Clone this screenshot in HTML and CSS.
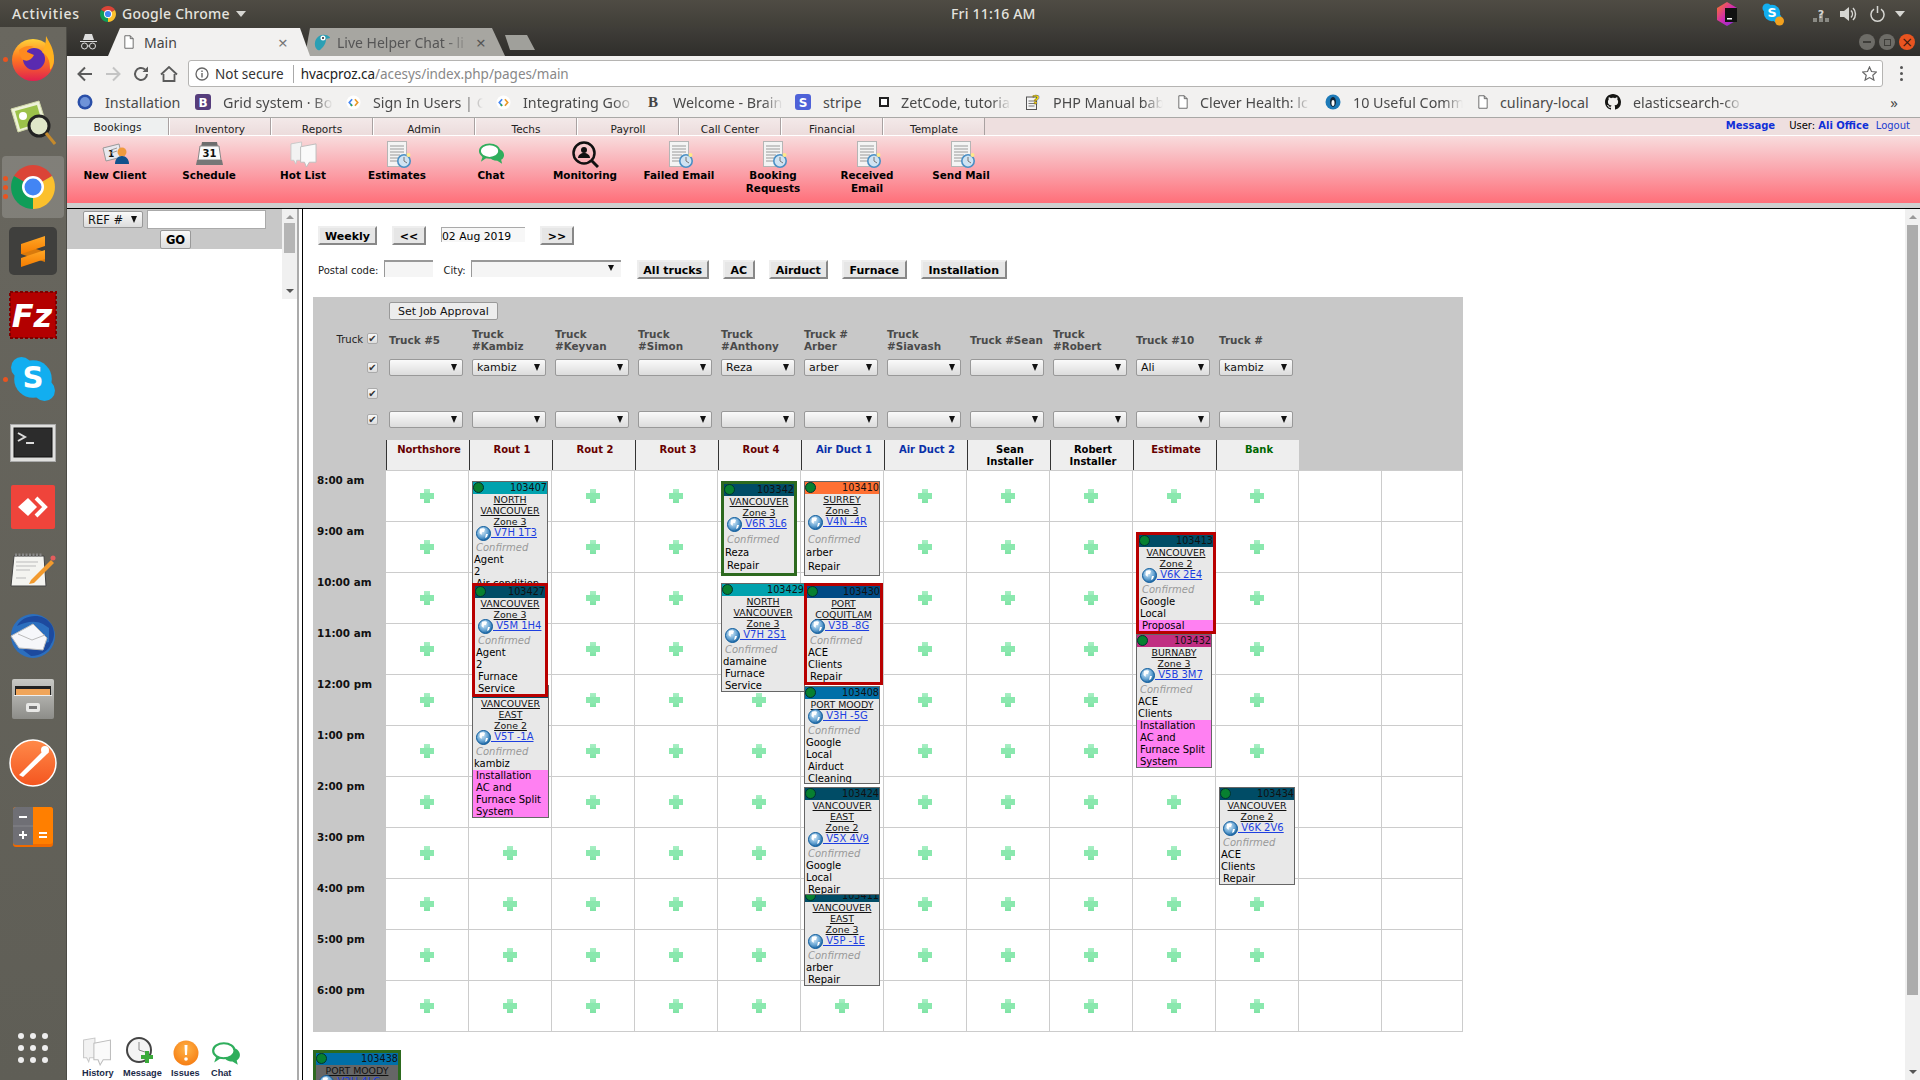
FILE: index.html
```html
<!DOCTYPE html>
<html lang="en">
<head>
<meta charset="utf-8">
<title>Main</title>
<link rel="stylesheet" href="styles.css">
</head>
<body>
<svg class="defs" aria-hidden="true">
  <defs>
    <linearGradient id="gFox" x1="0" y1="0" x2="0" y2="1"><stop offset="0" stop-color="#ffd33a"/><stop offset=".45" stop-color="#ff7a1f"/><stop offset="1" stop-color="#e0204f"/></linearGradient>
    <linearGradient id="gSub" x1="0" y1="0" x2="0" y2="1"><stop offset="0" stop-color="#ffa726"/><stop offset="1" stop-color="#f57c00"/></linearGradient>
    <linearGradient id="gPost" x1="0" y1="0" x2="0" y2="1"><stop offset="0" stop-color="#ff8a4a"/><stop offset="1" stop-color="#f4551f"/></linearGradient>
    <linearGradient id="gCab" x1="0" y1="0" x2="0" y2="1"><stop offset="0" stop-color="#c9c9c5"/><stop offset="1" stop-color="#8d8d89"/></linearGradient>
    <linearGradient id="gBrain" x1="0" y1="0" x2="1" y2="1"><stop offset="0" stop-color="#ff7a1a"/><stop offset=".5" stop-color="#d02bb0"/><stop offset="1" stop-color="#7a2be0"/></linearGradient>
    <radialGradient id="gGlobe" cx=".4" cy=".35" r=".7"><stop offset="0" stop-color="#d9ecf8"/><stop offset=".55" stop-color="#6ea9d6"/><stop offset="1" stop-color="#0f5c9c"/></radialGradient>
    <radialGradient id="gIssue" cx=".5" cy=".35" r=".7"><stop offset="0" stop-color="#ffb347"/><stop offset="1" stop-color="#f57a10"/></radialGradient>
    <symbol id="chrome" viewBox="0 0 44 44">
      <path d="M22 22 3 11A22 22 0 0 1 41 11Z" fill="#db4437"/>
      <path d="M22 22 41 11A22 22 0 0 1 22 44Z" fill="#fbc02d"/>
      <path d="M22 22 22 44A22 22 0 0 1 3 11Z" fill="#0f9d58"/>
      <circle cx="22" cy="22" r="11" fill="#fff"/><circle cx="22" cy="22" r="8.5" fill="#4285f4"/>
    </symbol>
    <symbol id="skype" viewBox="0 0 44 44">
      <circle cx="22" cy="22" r="18" fill="#12aef0"/><circle cx="11" cy="11" r="10" fill="#12aef0"/><circle cx="33" cy="33" r="10" fill="#12aef0"/>
      <text x="22" y="31" text-anchor="middle" class="svgtxt skype-s">S</text>
    </symbol>
    <symbol id="doc" viewBox="0 0 24 27">
      <rect x=".5" y=".5" width="19" height="25" fill="#f4f4f4" stroke="#b5b5b5"/>
      <path d="M3 5h14M3 8h14M3 11h14M3 14h10M3 17h8M3 20h8" stroke="#9a9a9a"/>
      <circle cx="17" cy="20" r="6.2" fill="#cfe3f2" stroke="#4a8fc4" stroke-width="1.6"/>
      <path d="M17 16v4l3 2" stroke="#777" fill="none"/>
      <circle cx="21.5" cy="14" r="2" fill="#ffe88a"/>
    </symbol>
    <symbol id="chat" viewBox="0 0 28 22">
      <ellipse cx="12" cy="8" rx="10" ry="7" fill="#fff" stroke="#2fae5c" stroke-width="2"/>
      <path d="M5 13 3 19l6-4Z" fill="#2fae5c"/>
      <path d="M21 5.5c4 1 6 3.500 6 6.500 0 2-1 4-3 5l1 4-5-3c-4 0-7-2-8-4 7 1 11-3 9-8.500Z" fill="#2fae5c"/>
    </symbol>
    <symbol id="notes" viewBox="0 0 28 28">
      <path d="M1 3 12 1v19l-5 0-1 4-2-4H1Z" fill="#f2f2f2" stroke="#c9c9c9"/>
      <path d="M11 6 27 3v19H20l-3 5-2-5h-4Z" fill="#fafafa" stroke="#bdbdbd"/>
    </symbol>
    <symbol id="globe" viewBox="0 0 15 15">
      <circle cx="7.500" cy="7.500" r="7" fill="url(#gGlobe)" stroke="#0f5c9c"/>
      <path d="M4 3c2-1 4-1 5 0L8 6 6 6 5.500 9 3.500 7Z" fill="#fff"/>
      <path d="M10 8l2 0-1 3-2 1Z" fill="#fff"/>
    </symbol>
    <symbol id="file" viewBox="0 0 12 16">
      <path d="M1 .5h6.500l3.500 3.500V15.500H1ZM7.500 .5V4H11" fill="#fff" stroke="#555"/>
    </symbol>
    <symbol id="gcode" viewBox="0 0 16 16">
      <circle cx="8" cy="8" r="7.500" fill="#fff"/>
      <path d="M6.500 4.500 3.500 8l3 3.500" fill="none" stroke="#4285f4" stroke-width="1.800"/>
      <path d="M9.500 4.500 12.500 8l-3 3.500" fill="none" stroke="#ea9a2a" stroke-width="1.800"/>
      <path d="M5 10l1.500 1.500" stroke="#34a853" stroke-width="1.800"/>
    </symbol>
  </defs>
</svg>

<div class="desktop">
  <header class="topbar">
    <div class="tb-left">
      <span class="activities">Activities</span>
      <svg class="tb-chrome" width="16" height="16"><use href="#chrome"/></svg>
      <span class="tb-app">Google Chrome</span>
      <span class="tb-caret"></span>
    </div>
    <time class="clock">Fri 11:16 AM</time>
    <div class="tb-right">
      <svg class="t-jb" width="20" height="24" viewBox="0 0 20 24"><path d="M10 0 20 6V18L10 24 0 18V6Z" fill="url(#gBrain)"/><rect x="8" y="6" width="12" height="14" fill="#111"/><rect x="10" y="16" width="5" height="1.500" fill="#fff"/></svg>
      <svg class="t-sk" width="22" height="24" viewBox="0 0 22 24"><use href="#skype" width="20" height="22"/><circle cx="17.500" cy="19" r="4.500" fill="#f2a11e"/></svg>
      <svg class="t-net" width="16" height="18" viewBox="0 0 16 18"><path d="M0 13h4v4H0ZM6 9h4v8H6ZM12 13h4v4h-4Z" fill="#8a8a84"/><text x="8" y="13" text-anchor="middle" class="svgtxt net-q">?</text></svg>
      <svg class="t-vol" width="17" height="16" viewBox="0 0 17 16"><path d="M0 5h4l5-4v14l-5-4H0Z" fill="#d6d6d2"/><path d="M11 4.500a5 5 0 0 1 0 7M13 2a8.500 8.500 0 0 1 0 12" fill="none" stroke="#d6d6d2" stroke-width="1.500"/></svg>
      <svg class="t-pow" width="15" height="16" viewBox="0 0 15 16"><path d="M4 3.200a6.500 6.500 0 1 0 7 0M7.500 0v7" fill="none" stroke="#d6d6d2" stroke-width="1.500"/></svg>
      <span class="tb-caret"></span>
    </div>
  </header>

  <div class="workarea">
    <nav class="dock">
      <div class="dk"><span class="pips"><i></i></span>
        <svg width="44" height="46" viewBox="0 0 44 46"><circle cx="22" cy="24" r="21" fill="url(#gFox)"/><circle cx="23" cy="23" r="11" fill="#5a2ab0"/><path d="M35 0c4 8 8 12 8 24 0 4-2 8-4 10 0-10-2-14-8-18 3-4 4-10 4-16Z" fill="#ffb21f"/><path d="M8 14c5-4 10-5 15-3-5 1-7 3-7 5l7 3c-3 6-8 7-12 4-2-3-3-6-3-9Z" fill="#ff8a1f"/></svg>
      </div>
      <div class="dk">
        <svg width="46" height="46" viewBox="0 0 46 46"><path d="M1 9 29 1l7 22-28 9Z" fill="#eef2d8" stroke="#cfd6a6"/><path d="M5 11 27 5l5 17-22 7Z" fill="#9cc24a"/><circle cx="13" cy="16" r="4" fill="#fff"/><circle cx="29" cy="26" r="10" fill="#dfe6c8" stroke="#222" stroke-width="3"/><path d="M36 33l9 11" stroke="#c58a2c" stroke-width="3"/></svg>
      </div>
      <div class="dk active"><span class="pips"><i></i><i></i><i></i></span>
        <svg width="44" height="44"><use href="#chrome"/></svg>
      </div>
      <div class="dk">
        <svg width="48" height="48" viewBox="0 0 48 48"><rect width="48" height="48" rx="5" fill="#3f3f3d"/><path d="M12 17v10l24 8V25Z" fill="#d97a0c"/><path d="M12 17 36 9v10L12 27Z" fill="url(#gSub)"/><path d="M12 31 36 23v9L12 40Z" fill="url(#gSub)"/></svg>
      </div>
      <div class="dk">
        <svg width="48" height="48" viewBox="0 0 48 48"><rect x="1" y="1" width="46" height="46" fill="#b30000" stroke="#7e0000" stroke-width="2" stroke-dasharray="3 2"/><text x="23" y="36" text-anchor="middle" class="svgtxt fz">Fz</text></svg>
      </div>
      <div class="dk"><span class="pips"><i></i></span>
        <svg width="46" height="46"><use href="#skype"/></svg>
      </div>
      <div class="dk">
        <svg width="46" height="38" viewBox="0 0 46 38"><rect x=".5" y=".5" width="45" height="37" fill="#e0e0de" stroke="#aaa"/><rect x="4" y="4" width="38" height="29" fill="#2c2c2c" stroke="#111"/><path d="M8 9l7 4-7 4" fill="none" stroke="#ddd" stroke-width="2"/><path d="M16 19h8" stroke="#ddd" stroke-width="2"/></svg>
      </div>
      <div class="dk">
        <svg width="44" height="44" viewBox="0 0 44 44"><rect width="44" height="44" rx="2" fill="#ef443b"/><path d="M7 22 17 13l9 9-9 9Z" fill="#fff"/><path d="M25 13l9 9-9 9" fill="none" stroke="#fff" stroke-width="4"/></svg>
      </div>
      <div class="dk">
        <svg width="46" height="36" viewBox="0 0 46 36"><path d="M4 3h30l2 30H1Z" fill="#f4f4f0" stroke="#444"/><path d="M5 2h28" stroke="#888" stroke-width="3" stroke-dasharray="2 1.500"/><path d="M6 9h22M6 13h20M6 17h14M6 25h10" stroke="#bbb"/><path d="M21 27 41 7l3 3-20 20-5 1Z" fill="#f29a2e"/><circle cx="43" cy="5" r="2.500" fill="#e35d5d"/></svg>
      </div>
      <div class="dk">
        <svg width="48" height="46" viewBox="0 0 48 46"><circle cx="24" cy="24" r="22" fill="#2c6fbe"/><path d="M8 14C14 2 34 0 42 12c4 6 4 14 0 20-2 6-10 12-20 12L14 38 40 30V16L34 12c-8-4-18-2-26 2Z" fill="#1d4a9e"/><path d="M2 24 24 12 38 26 34 38 10 36Z" fill="#f6f7fa" stroke="#bbb"/><path d="M9 22l14 6 13-5" fill="none" stroke="#bbb"/></svg>
      </div>
      <div class="dk">
        <svg width="42" height="42" viewBox="0 0 42 42"><rect y="1" width="42" height="40" rx="2" fill="url(#gCab)"/><rect x="3" y="8" width="36" height="9" fill="#222"/><rect x="4" y="11" width="34" height="6" fill="#f0a55a"/><rect x="2" y="17" width="38" height="1" fill="#eee"/><rect x="14" y="25" width="14" height="9" rx="2" fill="#e8e8e6"/><rect x="17" y="28" width="8" height="3" fill="#777"/></svg>
      </div>
      <div class="dk">
        <svg width="48" height="48" viewBox="0 0 48 48"><circle cx="24" cy="24" r="23" fill="url(#gPost)" stroke="#fff" stroke-width="1.500"/><path d="M10 36 32 14l4-4 4 3-4 4L14 38Z" fill="#fff"/><circle cx="36" cy="11" r="4" fill="#fff"/></svg>
      </div>
      <div class="dk">
        <svg width="40" height="40" viewBox="0 0 40 40"><rect width="40" height="40" rx="3" fill="#f06a00"/><rect width="40" height="37" rx="3" fill="#ff7f00"/><path d="M3 0h17v38H3a3 3 0 0 1-3-3V3a3 3 0 0 1 3-3Z" fill="#6f6f75"/><path d="M0 19h20" stroke="#87878c"/><path d="M6 10h8M6 28h8M10 24v8M26 26h8M26 30h8" stroke="#fff" stroke-width="2"/></svg>
      </div>
      <svg class="apps" width="30" height="30" viewBox="0 0 30 30"><g fill="#eee"><circle cx="3" cy="3" r="3"/><circle cx="15" cy="3" r="3"/><circle cx="27" cy="3" r="3"/><circle cx="3" cy="15" r="3"/><circle cx="15" cy="15" r="3"/><circle cx="27" cy="15" r="3"/><circle cx="3" cy="27" r="3"/><circle cx="15" cy="27" r="3"/><circle cx="27" cy="27" r="3"/></g></svg>
    </nav>

    <div class="browser">
      <div class="tabstrip">
        <svg class="incog" width="17" height="17" viewBox="0 0 17 17"><path d="M3 7 5 1h7l2 6ZM0 8h17v1H0Z" fill="#ddd"/><circle cx="4.500" cy="13" r="3" fill="none" stroke="#ddd"/><circle cx="12.500" cy="13" r="3" fill="none" stroke="#ddd"/><path d="M7.500 13h2" stroke="#ddd"/></svg>
        <div class="tab tab-on">
          <svg class="tab-ico" width="10" height="14"><use href="#file"/></svg>
          <span class="tab-t">Main</span><span class="tab-x">×</span>
        </div>
        <div class="tab tab-off">
          <svg class="tab-ico2" width="16" height="17" viewBox="0 0 16 17"><path d="M1 12C0 4 6 0 11 1c3 0 5 2 5 3l-4 1c0 6-4 9-6 11-2 1-4-1-5-4Z" fill="#2b9fb4"/><circle cx="9" cy="4" r="2.500" fill="#fff"/><circle cx="9" cy="4" r="1" fill="#222"/></svg>
          <span class="tab-t fade">Live Helper Chat - li</span><span class="tab-x">×</span>
        </div>
        <div class="newtab"></div>
        <div class="winbtns">
          <span class="wb"><i class="wb-min"></i></span>
          <span class="wb"><i class="wb-max"></i></span>
          <span class="wb wb-close">×</span>
        </div>
      </div>

      <div class="omnibar">
        <span class="nav"><svg width="16" height="16" viewBox="0 0 16 16"><path d="M15 8H2M8 1.500 1.500 8 8 14.500" fill="none" stroke="#5b5b5b" stroke-width="2"/></svg></span>
        <span class="nav"><svg width="16" height="16" viewBox="0 0 16 16"><path d="M1 8h13M8 1.500 14.500 8 8 14.500" fill="none" stroke="#c4c4c4" stroke-width="2"/></svg></span>
        <span class="nav"><svg width="16" height="16" viewBox="0 0 16 16"><path d="M14 8a6 6 0 1 1-2-4.500" fill="none" stroke="#5b5b5b" stroke-width="2"/><path d="M9.500 6H15V.5Z" fill="#5b5b5b"/></svg></span>
        <span class="nav"><svg width="18" height="16" viewBox="0 0 18 16"><path d="M1 8.500 9 1l8 7.500M3.500 8v7h11V8" fill="none" stroke="#5b5b5b" stroke-width="1.800"/></svg></span>
        <div class="urlbox">
          <svg width="14" height="14" viewBox="0 0 14 14"><circle cx="7" cy="7" r="6" fill="none" stroke="#666" stroke-width="1.300"/><path d="M7 6v4.500M7 3.500v1.500" stroke="#666" stroke-width="1.400"/></svg>
          <span class="ns">Not secure</span>
          <span class="url"><b>hvacproz.ca</b>/acesys/index.php/pages/main</span>
          <svg class="star" width="15" height="15" viewBox="0 0 15 15"><path d="M7.500 1 9.500 5.500l5 .5-3.700 3.300 1.100 4.800-4.400-2.500-4.400 2.500 1.100-4.800L.5 6l5-.5Z" fill="none" stroke="#666" stroke-width="1.200"/></svg>
        </div>
        <div class="kebab"><i></i><i></i><i></i></div>
      </div>

      <div class="bookmarks">
        <a class="bm"><svg width="16" height="16" viewBox="0 0 16 16"><circle cx="8" cy="8" r="7.500" fill="#2a4fa8"/><circle cx="8" cy="8" r="5" fill="#6f93d8"/></svg><span>Installation</span></a>
        <a class="bm"><svg width="16" height="16" viewBox="0 0 16 16"><rect width="16" height="16" rx="3" fill="#563d7c"/><text x="8" y="12.500" text-anchor="middle" class="svgtxt bm-b">B</text></svg><span class="fade">Grid system · Bo</span></a>
        <a class="bm"><svg width="15" height="15"><use href="#gcode"/></svg><span class="fade">Sign In Users | C</span></a>
        <a class="bm"><svg width="15" height="15"><use href="#gcode"/></svg><span class="fade">Integrating Goo</span></a>
        <a class="bm bm-w"><b class="brain">B</b><span class="fade">Welcome - Brain</span></a>
        <a class="bm"><svg width="16" height="16" viewBox="0 0 16 16"><rect width="16" height="16" rx="3" fill="#4f62d8"/><text x="8" y="12.500" text-anchor="middle" class="svgtxt bm-b">S</text></svg><span>stripe</span></a>
        <a class="bm"><svg width="10" height="10" viewBox="0 0 10 10"><rect x="1" y="1" width="8" height="8" fill="#fff" stroke="#222" stroke-width="2"/></svg><span class="fade">ZetCode, tutoria</span></a>
        <a class="bm"><svg width="15" height="16" viewBox="0 0 15 16"><rect x=".5" y="3" width="10" height="12.500" fill="#f4f4f4" stroke="#555"/><path d="M2.500 7h6M2.500 9.500h6M2.500 12h6" stroke="#777"/><text x="10" y="10" text-anchor="middle" class="svgtxt bm-q">?</text></svg><span class="fade">PHP Manual bab</span></a>
        <a class="bm"><svg width="10" height="14"><use href="#file"/></svg><span class="fade">Clever Health: lc</span></a>
        <a class="bm"><svg width="16" height="16" viewBox="0 0 16 16"><circle cx="8" cy="8" r="7.500" fill="#1d7ab8"/><ellipse cx="8" cy="8" rx="3" ry="5" fill="#12283a"/><ellipse cx="8" cy="9" rx="1.500" ry="3" fill="#fff"/></svg><span class="fade">10 Useful Comm</span></a>
        <a class="bm"><svg width="10" height="14"><use href="#file"/></svg><span>culinary-local</span></a>
        <a class="bm"><svg width="16" height="16" viewBox="0 0 16 16"><path fill="#161614" d="M8 0C3.580 0 0 3.580 0 8c0 3.540 2.290 6.530 5.470 7.590.4.070.550-.170.550-.380 0-.190-.010-.820-.010-1.490-2.010.370-2.530-.490-2.690-.940-.090-.230-.480-.940-.820-1.130-.280-.150-.680-.520-.010-.530.630-.010 1.080.580 1.230.820.720 1.210 1.870.870 2.330.660.070-.520.280-.870.510-1.070-1.780-.2-3.640-.890-3.640-3.950 0-.870.310-1.590.820-2.150-.080-.2-.360-1.020.080-2.120 0 0 .670-.210 2.200.820.640-.180 1.320-.270 2-.270.680 0 1.360.090 2 .270 1.530-1.040 2.200-.820 2.200-.820.440 1.100.160 1.920.080 2.120.510.560.820 1.270.820 2.150 0 3.070-1.870 3.750-3.650 3.950.290.250.540.730.540 1.480 0 1.070-.010 1.930-.010 2.200 0 .210.150.460.550.380A8.013 8.013 0 0 0 16 8c0-4.420-3.580-8-8-8Z"/></svg><span class="fade">elasticsearch-co</span></a>
        <span class="more">»</span>
      </div>

      <div class="page">
        <div class="ptabs">
          <a class="ptab on">Bookings</a><a class="ptab">Inventory</a><a class="ptab">Reports</a><a class="ptab">Admin</a><a class="ptab">Techs</a><a class="ptab">Payroll</a><a class="ptab">Call Center</a><a class="ptab">Financial</a><a class="ptab">Template</a>
          <div class="userinfo"><b class="lnk">Message</b><span class="usr">User: <b class="lnk">Ali Office</b></span><a class="logout">Logout</a></div>
        </div>
        <div class="ribbon">
          <a class="rb"><span class="rb-i">
            <svg width="27" height="22" viewBox="0 0 27 22"><path d="M1 5 17 1l3 13-16 4Z" fill="#e8e8ee" stroke="#999"/><text x="6" y="14" class="svgtxt rb-one">1</text><path d="M9 7l6-2M9 10l6-2" stroke="#999"/><circle cx="20" cy="9" r="4.500" fill="#f09a3e"/><path d="M13 21c0-5 3-8 7-8s7 3 7 8Z" fill="#12518c"/></svg></span>New Client</a>
          <a class="rb"><span class="rb-i">
            <svg width="27" height="24" viewBox="0 0 27 24"><path d="M6 0h15l1 5H5Z" fill="#6d6d6d"/><path d="M4 4h19l2 14H2Z" fill="#fafafa" stroke="#888"/><text x="13.500" y="15" text-anchor="middle" class="svgtxt rb-cal">31</text><path d="M1 18h25l1 5H0Z" fill="#777"/></svg></span>Schedule</a>
          <a class="rb"><span class="rb-i"><svg width="27" height="27"><use href="#notes"/></svg></span>Hot List</a>
          <a class="rb"><span class="rb-i"><svg class="doc-i" width="24" height="27"><use href="#doc"/></svg></span>Estimates</a>
          <a class="rb"><span class="rb-i"><svg width="27" height="22"><use href="#chat"/></svg></span>Chat</a>
          <a class="rb"><span class="rb-i">
            <svg width="27" height="27" viewBox="0 0 27 27"><circle cx="12" cy="12" r="10.500" fill="none" stroke="#111" stroke-width="2.500"/><circle cx="12" cy="9" r="3" fill="#111"/><path d="M6 17c0-3 3-5 6-5s6 2 6 5Z" fill="#111"/><path d="M19 19l7 7" stroke="#111" stroke-width="3"/></svg></span>Monitoring</a>
          <a class="rb"><span class="rb-i"><svg class="doc-i" width="24" height="27"><use href="#doc"/></svg></span>Failed Email</a>
          <a class="rb"><span class="rb-i"><svg class="doc-i" width="24" height="27"><use href="#doc"/></svg></span>Booking<br>Requests</a>
          <a class="rb"><span class="rb-i"><svg class="doc-i" width="24" height="27"><use href="#doc"/></svg></span>Received<br>Email</a>
          <a class="rb"><span class="rb-i"><svg class="doc-i" width="24" height="27"><use href="#doc"/></svg></span>Send Mail</a>
        </div>
        <div class="ribbon-foot"></div>

        <div class="frames">
          <aside class="side">
            <div class="side-top">
              <div class="search">
                <div class="search-row"><div class="sel sel-ref">REF #</div><span class="search-in"></span></div>
                <button class="go">GO</button>
              </div>
              <div class="sb sb-side"><i class="sb-up"></i><i class="sb-thumb"></i><i class="sb-dn"></i></div>
            </div>
            <div class="side-tools">
              <a class="st st-h"><svg width="30" height="29"><use href="#notes"/></svg>History</a>
              <a class="st st-m"><svg width="28" height="29" viewBox="0 0 28 29"><circle cx="13" cy="13" r="12" fill="#f4f4f4" stroke="#444" stroke-width="2"/><path d="M13 5v8l6 2" fill="none" stroke="#888"/><path d="M19 14h4v4h4v4h-4v4h-4v-4h-4v-4h4Z" fill="#3aaa3a"/></svg>Message</a>
              <a class="st st-i"><svg width="26" height="26" viewBox="0 0 26 26"><circle cx="13" cy="13" r="12.500" fill="url(#gIssue)"/><path d="M11.500 5h3l-.5 10h-2Z" fill="#fff"/><circle cx="13" cy="19" r="1.800" fill="#fff"/></svg>Issues</a>
              <a class="st"><svg width="30" height="24"><use href="#chat"/></svg>Chat</a>
            </div>
          </aside>
          <div class="rule"></div>

          <main class="main">
            <div class="ctl ctl-1">
              <button class="btn">Weekly</button>
              <button class="btn btn-nav">&lt;&lt;</button>
              <span class="date">02 Aug 2019</span>
              <button class="btn btn-nav">&gt;&gt;</button>
            </div>
            <div class="ctl ctl-2">
              <span>Postal code:</span><span class="fld fld-pc"></span>
              <span class="city">City:</span><span class="fld fld-city"></span>
              <button class="btn b-all">All trucks</button>
              <button class="btn b-ac">AC</button>
              <button class="btn b-air">Airduct</button>
              <button class="btn b-fur">Furnace</button>
              <button class="btn b-ins">Installation</button>
            </div>

            <section class="panel">
              <div class="setjob"><button class="approve">Set Job Approval</button></div>
              <div class="row r-head">
                <div class="lead">Truck <i class="chk"></i></div>
                <div class="th">Truck #5</div><div class="th">Truck<br>#Kambiz</div><div class="th">Truck<br>#Keyvan</div><div class="th">Truck<br>#Simon</div><div class="th">Truck<br>#Anthony</div><div class="th">Truck #<br>Arber</div><div class="th">Truck<br>#Siavash</div><div class="th">Truck #Sean</div><div class="th">Truck<br>#Robert</div><div class="th">Truck #10</div><div class="th">Truck #</div>
              </div>
              <div class="row r-sel">
                <div class="lead"><i class="chk"></i></div>
                <div class="tc"><div class="sel"></div></div><div class="tc"><div class="sel">kambiz</div></div><div class="tc"><div class="sel"></div></div><div class="tc"><div class="sel"></div></div><div class="tc"><div class="sel">Reza</div></div><div class="tc"><div class="sel">arber</div></div><div class="tc"><div class="sel"></div></div><div class="tc"><div class="sel"></div></div><div class="tc"><div class="sel"></div></div><div class="tc"><div class="sel">Ali</div></div><div class="tc"><div class="sel">kambiz</div></div>
              </div>
              <div class="row r-chk"><div class="lead"><i class="chk"></i></div></div>
              <div class="row r-chk">
                <div class="lead"><i class="chk"></i></div>
                <div class="tc"><div class="sel"></div></div><div class="tc"><div class="sel"></div></div><div class="tc"><div class="sel"></div></div><div class="tc"><div class="sel"></div></div><div class="tc"><div class="sel"></div></div><div class="tc"><div class="sel"></div></div><div class="tc"><div class="sel"></div></div><div class="tc"><div class="sel"></div></div><div class="tc"><div class="sel"></div></div><div class="tc"><div class="sel"></div></div><div class="tc"><div class="sel"></div></div>
              </div>
              <div class="row r-hd">
                <div></div>
                <div class="hd maroon">Northshore</div><div class="hd maroon">Rout 1</div><div class="hd maroon">Rout 2</div><div class="hd maroon">Rout 3</div><div class="hd maroon">Rout 4</div><div class="hd navy">Air Duct 1</div><div class="hd navy">Air Duct 2</div><div class="hd">Sean<br>Installer</div><div class="hd">Robert<br>Installer</div><div class="hd maroon">Estimate</div><div class="hd forest">Bank</div>
              </div>

              <div class="board">
                <div class="row"><div class="hour">8:00 am</div><i class="c p"></i><i class="c p"></i><i class="c p"></i><i class="c p"></i><i class="c p"></i><i class="c p"></i><i class="c p"></i><i class="c p"></i><i class="c p"></i><i class="c p"></i><i class="c p"></i><i class="c"></i><i class="c"></i></div>
                <div class="row"><div class="hour">9:00 am</div><i class="c p"></i><i class="c p"></i><i class="c p"></i><i class="c p"></i><i class="c p"></i><i class="c p"></i><i class="c p"></i><i class="c p"></i><i class="c p"></i><i class="c p"></i><i class="c p"></i><i class="c"></i><i class="c"></i></div>
                <div class="row"><div class="hour">10:00 am</div><i class="c p"></i><i class="c p"></i><i class="c p"></i><i class="c p"></i><i class="c p"></i><i class="c p"></i><i class="c p"></i><i class="c p"></i><i class="c p"></i><i class="c p"></i><i class="c p"></i><i class="c"></i><i class="c"></i></div>
                <div class="row"><div class="hour">11:00 am</div><i class="c p"></i><i class="c p"></i><i class="c p"></i><i class="c p"></i><i class="c p"></i><i class="c p"></i><i class="c p"></i><i class="c p"></i><i class="c p"></i><i class="c p"></i><i class="c p"></i><i class="c"></i><i class="c"></i></div>
                <div class="row"><div class="hour">12:00 pm</div><i class="c p"></i><i class="c p"></i><i class="c p"></i><i class="c p"></i><i class="c p"></i><i class="c p"></i><i class="c p"></i><i class="c p"></i><i class="c p"></i><i class="c p"></i><i class="c p"></i><i class="c"></i><i class="c"></i></div>
                <div class="row"><div class="hour">1:00 pm</div><i class="c p"></i><i class="c p"></i><i class="c p"></i><i class="c p"></i><i class="c p"></i><i class="c p"></i><i class="c p"></i><i class="c p"></i><i class="c p"></i><i class="c p"></i><i class="c p"></i><i class="c"></i><i class="c"></i></div>
                <div class="row"><div class="hour">2:00 pm</div><i class="c p"></i><i class="c p"></i><i class="c p"></i><i class="c p"></i><i class="c p"></i><i class="c p"></i><i class="c p"></i><i class="c p"></i><i class="c p"></i><i class="c p"></i><i class="c p"></i><i class="c"></i><i class="c"></i></div>
                <div class="row"><div class="hour">3:00 pm</div><i class="c p"></i><i class="c p"></i><i class="c p"></i><i class="c p"></i><i class="c p"></i><i class="c p"></i><i class="c p"></i><i class="c p"></i><i class="c p"></i><i class="c p"></i><i class="c p"></i><i class="c"></i><i class="c"></i></div>
                <div class="row"><div class="hour">4:00 pm</div><i class="c p"></i><i class="c p"></i><i class="c p"></i><i class="c p"></i><i class="c p"></i><i class="c p"></i><i class="c p"></i><i class="c p"></i><i class="c p"></i><i class="c p"></i><i class="c p"></i><i class="c"></i><i class="c"></i></div>
                <div class="row"><div class="hour">5:00 pm</div><i class="c p"></i><i class="c p"></i><i class="c p"></i><i class="c p"></i><i class="c p"></i><i class="c p"></i><i class="c p"></i><i class="c p"></i><i class="c p"></i><i class="c p"></i><i class="c p"></i><i class="c"></i><i class="c"></i></div>
                <div class="row last"><div class="hour">6:00 pm</div><i class="c p"></i><i class="c p"></i><i class="c p"></i><i class="c p"></i><i class="c p"></i><i class="c p"></i><i class="c p"></i><i class="c p"></i><i class="c p"></i><i class="c p"></i><i class="c p"></i><i class="c"></i><i class="c"></i></div>

                <article class="job j407">
                  <header class="jh teal"><i class="dot"></i>103407</header>
                  <p class="loc">NORTH<br>VANCOUVER<br>Zone 3</p>
                  <a class="pc"><svg width="15" height="15"><use href="#globe"/></svg>&nbsp;V7H 1T3</a>
                  <p class="st8">Confirmed</p>
                  <p class="who">Agent</p><p class="who">2</p>
                  <p class="svc">Air condition</p>
                </article>
                <article class="job j-east">
                  <header class="jh deep"><i class="dot"></i></header>
                  <p class="loc">VANCOUVER<br>EAST<br>Zone 2</p>
                  <a class="pc"><svg width="15" height="15"><use href="#globe"/></svg>&nbsp;V5T -1A</a>
                  <p class="st8">Confirmed</p>
                  <p class="who">kambiz</p>
                  <p class="svc pink">Installation AC and Furnace Split System</p>
                </article>
                <article class="job j427 alert">
                  <header class="jh deep"><i class="dot"></i>103427</header>
                  <p class="loc">VANCOUVER<br>Zone 3</p>
                  <a class="pc"><svg width="15" height="15"><use href="#globe"/></svg>&nbsp;V5M 1H4</a>
                  <p class="st8">Confirmed</p>
                  <p class="who">Agent</p><p class="who">2</p>
                  <p class="svc">Furnace<br>Service</p>
                </article>
                <article class="job j342 locked">
                  <header class="jh deep"><i class="dot"></i>103342</header>
                  <p class="loc">VANCOUVER<br>Zone 3</p>
                  <a class="pc"><svg width="15" height="15"><use href="#globe"/></svg>&nbsp;V6R 3L6</a>
                  <p class="st8">Confirmed</p>
                  <p class="who">Reza</p>
                  <p class="svc">Repair</p>
                </article>
                <article class="job j410">
                  <header class="jh orange"><i class="dot"></i>103410</header>
                  <p class="loc">SURREY<br>Zone 3</p>
                  <a class="pc"><svg width="15" height="15"><use href="#globe"/></svg>&nbsp;V4N -4R</a>
                  <p class="st8">Confirmed</p>
                  <p class="who">arber</p>
                  <p class="svc">Repair</p>
                </article>
                <article class="job j429">
                  <header class="jh teal"><i class="dot"></i>103429</header>
                  <p class="loc">NORTH<br>VANCOUVER<br>Zone 3</p>
                  <a class="pc"><svg width="15" height="15"><use href="#globe"/></svg>&nbsp;V7H 2S1</a>
                  <p class="st8">Confirmed</p>
                  <p class="who">damaine</p>
                  <p class="svc">Furnace<br>Service</p>
                </article>
                <article class="job j430 alert">
                  <header class="jh navyh"><i class="dot"></i>103430</header>
                  <p class="loc">PORT<br>COQUITLAM</p>
                  <a class="pc"><svg width="15" height="15"><use href="#globe"/></svg>&nbsp;V3B -8G</a>
                  <p class="st8">Confirmed</p>
                  <p class="who">ACE</p><p class="who">Clients</p>
                  <p class="svc">Repair</p>
                </article>
                <article class="job j408">
                  <header class="jh sky"><i class="dot"></i>103408</header>
                  <p class="loc">PORT MOODY</p>
                  <a class="pc"><svg width="15" height="15"><use href="#globe"/></svg>&nbsp;V3H -5G</a>
                  <p class="st8">Confirmed</p>
                  <p class="who">Google</p><p class="who">Local</p>
                  <p class="svc">Airduct<br>Cleaning</p>
                </article>
                <article class="job j411">
                  <header class="jh deep"><i class="dot"></i>103411</header>
                  <p class="loc">VANCOUVER<br>EAST<br>Zone 3</p>
                  <a class="pc"><svg width="15" height="15"><use href="#globe"/></svg>&nbsp;V5P -1E</a>
                  <p class="st8">Confirmed</p>
                  <p class="who">arber</p>
                  <p class="svc">Repair</p>
                </article>
                <article class="job j424">
                  <header class="jh deep"><i class="dot"></i>103424</header>
                  <p class="loc">VANCOUVER<br>EAST<br>Zone 2</p>
                  <a class="pc"><svg width="15" height="15"><use href="#globe"/></svg>&nbsp;V5X 4V9</a>
                  <p class="st8">Confirmed</p>
                  <p class="who">Google</p><p class="who">Local</p>
                  <p class="svc">Repair</p>
                </article>
                <article class="job j413 alert">
                  <header class="jh deep"><i class="dot"></i>103413</header>
                  <p class="loc">VANCOUVER<br>Zone 2</p>
                  <a class="pc"><svg width="15" height="15"><use href="#globe"/></svg>&nbsp;V6K 2E4</a>
                  <p class="st8">Confirmed</p>
                  <p class="who">Google</p><p class="who">Local</p>
                  <p class="svc pink">Proposal</p>
                </article>
                <article class="job j432">
                  <header class="jh plum"><i class="dot"></i>103432</header>
                  <p class="loc">BURNABY<br>Zone 3</p>
                  <a class="pc"><svg width="15" height="15"><use href="#globe"/></svg>&nbsp;V5B 3M7</a>
                  <p class="st8">Confirmed</p>
                  <p class="who">ACE</p><p class="who">Clients</p>
                  <p class="svc pink">Installation AC and Furnace Split System</p>
                </article>
                <article class="job j434">
                  <header class="jh deep"><i class="dot"></i>103434</header>
                  <p class="loc">VANCOUVER<br>Zone 2</p>
                  <a class="pc"><svg width="15" height="15"><use href="#globe"/></svg>&nbsp;V6K 2V6</a>
                  <p class="st8">Confirmed</p>
                  <p class="who">ACE</p><p class="who">Clients</p>
                  <p class="svc">Repair</p>
                </article>
              </div>
            </section>

            <article class="job j438 locked">
              <header class="jh sky"><i class="dot"></i>103438</header>
              <p class="loc">PORT MOODY</p>
              <a class="pc"><svg width="15" height="15"><use href="#globe"/></svg>&nbsp;V3H 4LC</a>
            </article>
          </main>
          <div class="sb sb-main"><i class="sb-up"></i><i class="sb-thumb"></i><i class="sb-dn"></i></div>
        </div>
      </div>
    </div>
  </div>
</div>
</body>
</html>
```

FILE: styles.css
```css
* { box-sizing: border-box; }
html, body { margin: 0; height: 100%; overflow: hidden; }
body { font: 10px "DejaVu Sans", sans-serif; color: #000; background: #fff; }
p { margin: 0; }
i { font-style: normal; }
button { font-family: inherit; }
.defs { position: absolute; width: 0; height: 0; }
.svgtxt { font-family: "DejaVu Sans", sans-serif; font-weight: 700; }
.skype-s { font-size: 28px; fill: #fff; }
.net-q { font-size: 11px; fill: #d6d6d2; }
.fz { font-size: 32px; font-style: italic; fill: #fff; }
.bm-b { font-size: 12px; fill: #fff; }
.bm-q { font-size: 13px; fill: #f5d90a; stroke: #333; stroke-width: .4px; }
.rb-one { font-size: 9px; fill: #111; }
.rb-cal { font-size: 10px; fill: #111; }

.desktop { display: grid; grid-template-rows: 27px 1fr; width: 1920px; height: 1080px; }

/* GNOME top bar */
.topbar { display: flex; align-items: center; background: linear-gradient(#4f4c44, #403e38); color: #e4e3df; font: 500 14px "Noto Sans", sans-serif; }
.tb-left { display: flex; align-items: center; width: 951px; padding-left: 12px; }
.activities { width: 88px; letter-spacing: .75px; }
.tb-chrome { margin-right: 6px; }
.tb-app { letter-spacing: .25px; }
.tb-caret { width: 0; height: 0; margin-left: 6px; border: 5px solid transparent; border-top: 6px solid #d6d6d2; border-bottom: 0; }
.clock { letter-spacing: .2px; }
.tb-right { display: flex; align-items: center; margin-left: auto; padding-right: 15px; }
.t-jb { margin-right: 25px; }
.t-sk { margin-right: 29px; }
.t-net { margin-right: 11px; }
.t-vol { margin-right: 13px; }
.t-pow { margin-right: 4px; }

.workarea { display: flex; min-height: 0; }

/* Dock */
.dock { flex: 0 0 67px; display: flex; flex-direction: column; align-items: center; background: linear-gradient(#69675f, #5f5e56); border-right: 1px solid #4c4b45; }
.dk { position: relative; flex: 0 0 64px; width: 66px; display: flex; align-items: center; justify-content: center; }
.dk.active::before { content: ""; position: absolute; left: 2px; right: 2px; top: 1px; bottom: 1px; border-radius: 4px; background: rgba(255, 255, 255, .17); }
.dk svg { position: relative; }
.pips { position: absolute; left: 3px; top: 0; bottom: 0; display: flex; flex-direction: column; justify-content: center; gap: 4px; }
.pips i { width: 5px; height: 5px; border-radius: 50%; background: #e95420; }
.apps { margin-top: auto; margin-bottom: 17px; }

/* Browser chrome */
.browser { flex: 1; min-width: 0; display: flex; flex-direction: column; }
.tabstrip { flex: 0 0 29px; display: flex; align-items: flex-end; padding-left: 13px; background: linear-gradient(#403e39, #2f2e2b); position: relative; }
.incog { align-self: center; margin-right: 11px; }
.tab { display: flex; align-items: center; height: 28px; font: 14px "Noto Sans", sans-serif; }
.tab-on { position: relative; z-index: 1; width: 202px; padding-left: 16px; background: #f2f1f0; color: #444; clip-path: polygon(12px 0, 192px 0, 100% 100%, 0 100%); }
.tab-ico { margin-right: 10px; }
.tab-on .tab-t { flex: 1; }
.tab-x { width: 20px; font-size: 17px; color: #777; }
.tab-on .tab-x { margin-right: 12px; }
.tab-off { width: 200px; margin-left: -5px; padding-left: 9px; background: #a7a6a1; color: #555; clip-path: polygon(5px 0, 187px 0, 100% 100%, 0 100%); }
.tab-ico2 { margin-right: 7px; }
.tab-off .tab-t { width: 134px; white-space: nowrap; }
.tab-off .tab-x { margin-left: 5px; color: #555; }
.newtab { width: 30px; height: 15px; margin: 0 0 6px 0; background: #a0a09b; clip-path: polygon(0 0, 22px 0, 100% 100%, 5px 100%); }
.winbtns { position: absolute; right: 5px; top: 7px; display: flex; gap: 4px; }
.wb { width: 16px; height: 16px; border-radius: 50%; background: #6d6c67; display: flex; align-items: center; justify-content: center; }
.wb-min { width: 8px; height: 2px; background: #3e3d39; }
.wb-max { width: 7px; height: 7px; border: 1px solid #3e3d39; }
.wb-close { background: #e95420; color: #3a1a10; font-size: 14px; line-height: 1; }

.omnibar { flex: 0 0 32px; display: flex; align-items: flex-start; padding: 4px 0 0 4px; background: #f2f1f0; }
.nav { width: 28px; height: 27px; display: flex; align-items: center; justify-content: center; }
.urlbox { display: flex; align-items: center; width: 1695px; height: 27px; margin-left: 5px; padding-left: 6px; background: #fff; border: 1px solid #b5b4b2; border-radius: 3px; font: 13.500px "Noto Sans", sans-serif; }
.ns { margin-left: 6px; padding-right: 9px; border-right: 1px solid #aaa; color: #333; line-height: 18px; }
.url { margin-left: 7px; color: #888; letter-spacing: -.05px; }
.url b { font-weight: 400; color: #222; }
.star { margin-left: auto; margin-right: 5px; }
.kebab { flex: 1; height: 27px; display: flex; flex-direction: column; align-items: center; justify-content: center; gap: 3px; }
.kebab i { width: 3px; height: 3px; border-radius: 50%; background: #555; }

.bookmarks { flex: 0 0 30px; display: grid; grid-template-columns: 118px 151px 150px 149px 150px 84px 147px 152px 147px 153px 127px 270px auto; align-items: center; padding: 0 0 1px 10px; background: #f2f1f0; border-bottom: 1px solid #a9a8a6; font: 14.300px "Noto Sans", sans-serif; color: #4a4a4a; }
.bm { display: flex; align-items: center; gap: 12px; min-width: 0; white-space: nowrap; }
.bm span.fade { width: 110px; -webkit-mask-image: linear-gradient(90deg, #000 82%, transparent); mask-image: linear-gradient(90deg, #000 82%, transparent); }
.tab-t.fade { -webkit-mask-image: linear-gradient(90deg, #000 80%, transparent); mask-image: linear-gradient(90deg, #000 80%, transparent); }
.bm-w { padding-left: 3px; gap: 15px; }
.brain { font: 700 15px "Liberation Serif", serif; color: #444; }
.more { position: absolute; right: 22px; font-size: 15px; }

/* Application page */
.page { flex: 1; min-height: 0; display: flex; flex-direction: column; }
.ptabs { flex: 0 0 18px; display: flex; background: #eedfdf; border-bottom: 1px solid #fff; }
.ptab { width: 102px; height: 17px; padding-top: 5px; text-align: center; font-size: 10.500px; line-height: 12px; color: #222; background: linear-gradient(#f3e9e9, #ecdcdc); border-right: 1px solid #a9a1a1; border-left: 1px solid #fff; }
.ptab.on { padding-top: 3px; background: #eef0f0; border-left: 0; }
.userinfo { display: flex; align-items: center; gap: 14px; height: 17px; margin-left: auto; padding: 0 10px 2px 0; font-size: 10px; }
.lnk { color: #1030d8; font-weight: 700; }
.logout { margin-left: -7px; color: #2040d0; }
.ribbon { flex: 0 0 67px; display: flex; padding-left: 1px; background: linear-gradient(#f8dcdd, #fba0a8 55%, #ff6f79); }
.rb { width: 94px; padding-top: 3px; text-align: center; font-size: 10.400px; font-weight: 700; line-height: 13px; }
.rb-i { display: flex; align-items: center; justify-content: center; height: 30px; }
.doc-i { margin-left: 4px; }
.ribbon-foot { flex: 0 0 6px; background: #cfcfcf; border-bottom: 1px solid #000; }

.frames { flex: 1; min-height: 0; display: flex; }
.side { flex: 0 0 230px; display: flex; flex-direction: column; }
.side-top { display: flex; align-items: flex-start; }
.search { width: 215px; height: 40px; background: #c8c8c8; }
.search-row { display: flex; gap: 4px; padding: 2px 0 0 16px; }
.sel { position: relative; height: 17px; padding-left: 4px; font-size: 11px; line-height: 16px; color: #111; background: linear-gradient(#fafafa, #dcdcdc); border: 1px solid #999; border-radius: 2px; }
.sel::after { content: ""; position: absolute; right: 5px; top: 4px; border: 3.500px solid transparent; border-top: 7px solid #111; border-bottom: 0; }
.sel-ref { width: 60px; font-size: 11.500px; }
.search-in { width: 119px; height: 19px; margin-top: -1px; background: #fff; border: 1px solid #aaa; }
.go { display: block; width: 31px; height: 19px; margin: 1px 0 0 93px; padding: 0; font-size: 11.500px; font-weight: 700; background: linear-gradient(#fafafa, #ddd); border: 1px solid #999; border-radius: 2px; }
.sb { display: flex; flex-direction: column; align-items: center; flex: 0 0 15px; background: #f0f0f0; position: relative; }
.sb-side { height: 90px; }
.sb-up { width: 0; height: 0; margin-top: 6px; border: 4px solid transparent; border-bottom: 4px solid #999; border-top: 0; }
.sb-thumb { width: 11px; background: #b5b5b5; }
.sb-side .sb-thumb { height: 30px; margin-top: 4px; }
.sb-dn { width: 0; height: 0; margin-top: auto; margin-bottom: 6px; border: 4px solid transparent; border-top: 4px solid #555; border-bottom: 0; }
.side-tools { display: flex; align-items: flex-end; margin-top: auto; padding: 0 0 1px 15px; }
.st { display: flex; flex-direction: column; align-items: flex-start; gap: 1px; font: 700 9.200px/12px "Liberation Sans", sans-serif; color: #1a2a48; }
.st-h { width: 41px; }
.st-m { width: 48px; }
.st-m svg { margin-left: 3px; }
.st-i { width: 40px; }
.st-i svg { margin-left: 2px; }
.rule { flex: 0 0 6px; border-left: 2px solid #ababab; border-right: 1px solid #000; background: #fff; }

.main { flex: 1; min-width: 0; overflow: hidden; padding: 17px 0 0 10px; }
.sb-main { width: 15px; }
.sb-main .sb-thumb { height: 770px; margin-top: 6px; background: #acacac; }
.ctl { display: flex; align-items: flex-start; padding-left: 5px; }
.ctl-1 { height: 34px; }
.ctl-2 { height: 37px; font-size: 10px; line-height: 22px; color: #222; }
.btn { height: 19px; padding: 1px 0 0; font-size: 11px; font-weight: 700; color: #000; background: #e6e6e6; border: 2px solid; border-color: #eee #888 #888 #eee; border-radius: 0; }
.ctl-1 .btn { width: 59px; margin-right: 15px; }
.ctl-1 .btn-nav { width: 34px; }
.date { width: 84px; height: 15px; margin: 1px 15px 0 0; font-size: 10.800px; line-height: 17px; background: #f7f7f7; border-top: 1px solid #aaa; border-left: 1px solid #aaa; }
.fld { height: 17px; background: #f5f5f5; border-top: 2px solid #999; border-left: 1px solid #999; }
.fld-pc { width: 49px; margin-left: 5px; }
.city { margin-left: 11px; }
.fld-city { position: relative; width: 150px; margin-left: 5px; }
.fld-city::after { content: ""; position: absolute; right: 7px; top: 3px; border: 3.500px solid transparent; border-top: 6px solid #111; border-bottom: 0; }
.ctl-2 .btn { margin-left: 16px; }
.ctl-2 .btn + .btn { margin-left: 14px; }
.b-all { width: 72px; }
.b-ac { width: 32px; }
.b-air { width: 59px; }
.b-fur { width: 65px; }
.b-ins { width: 86px; }

.panel { --cols: 73px repeat(12, 83px) 81px; width: 1150px; background: #c8c8c8; }
.setjob { height: 30px; padding: 5px 0 0 76px; }
.approve { width: 109px; height: 18px; padding: 0; font-size: 11px; color: #111; background: #ededed; border: 1px solid #999; border-radius: 2px; }
.row { display: grid; grid-template-columns: var(--cols); }
.r-head { height: 25px; align-items: center; }
.r-sel { height: 28px; padding-top: 7px; }
.r-chk { height: 26px; padding-top: 5px; }
.lead { display: flex; align-items: flex-start; justify-content: flex-end; padding-right: 8px; font-size: 10px; line-height: 14px; color: #222; }
.r-head .lead { align-items: center; gap: 4px; padding-top: 1px; }
.chk { display: block; width: 11px; height: 11px; background: linear-gradient(#f8f8f8, #ddd); border: 1px solid #aaa; border-radius: 2px; color: #333; font-size: 10px; line-height: 9px; text-align: center; }
.chk::after { content: "✔"; }
.r-sel .chk, .r-chk .chk { margin-top: 3px; }
.r-head .chk { margin-bottom: 4px; }
.th { padding-left: 3px; font-size: 10.400px; font-weight: 700; line-height: 12px; color: #4a4a4a; }
.tc { padding-left: 3px; }
.tc .sel { width: 74px; }
.r-hd { height: 38px; padding-top: 8px; }
.hd { padding: 4px 0 0 2px; text-align: center; font-size: 10px; font-weight: 700; line-height: 12px; background: #eee; border-left: 1px solid #333; }
.maroon { color: #660000; }
.navy { color: #0a30a8; }
.forest { color: #006600; }

.board { position: relative; }
.board .row { height: 51px; }
.board .row.last { height: 52px; }
.last .c { border-bottom: 1px solid #ccc; }
.hour { padding: 4px 0 0 4px; font-size: 10.400px; font-weight: 700; line-height: 13px; color: #111; }
.c { display: block; background-color: #fff; border-right: 1px solid #ccc; border-top: 1px solid #ccc; }
.p { background-image: linear-gradient(#8ae8ae, #8ae8ae), linear-gradient(#a8efc4, #7ee3a4); background-size: 14px 6px, 6px 14px; background-position: center; background-repeat: no-repeat; }

/* Job cards lie over the hour grid */
.job { position: absolute; overflow: hidden; font-size: 10px; line-height: 12px; background: #e8e8e8; border: 1px solid #666; }
.alert { border: 3px solid #b80000; z-index: 2; }
.locked { border: 3px solid #2d6a1f; }
.jh { position: relative; height: 12px; text-align: right; font-size: 9.700px; line-height: 12px; color: #111; white-space: nowrap; }
.dot { position: absolute; left: 0; top: 0; width: 11px; height: 11px; border-radius: 50%; background: #078030; border: 1px solid #033; }
.teal { background: #00a2ae; }
.deep { background: #004c66; }
.orange { background: #ff7033; }
.navyh { background: #004a85; }
.sky { background: #006fa8; }
.plum { background: #c02f82; }
.loc { text-align: center; font-size: 9.400px; line-height: 11px; text-decoration: underline; color: #111; }
.pc { display: flex; align-items: flex-start; height: 15px; padding-left: 3px; line-height: 11px; color: #1d3fe0; text-decoration: underline; white-space: nowrap; }
.pc svg { flex: none; margin-top: -1px; }
.st8 { padding-left: 3px; font-style: italic; color: #999; }
.who { padding-left: 1px; white-space: nowrap; }
.svc { padding-left: 3px; }
.pink { background: #ff80f2; }
.j342 .st8 { margin-top: 1px; }
.j342 .who, .j342 .svc { line-height: 13px; }
.j410 .st8 { margin-top: 3px; }
.j410 .who, .j410 .svc { line-height: 14px; }

.j407 { left: 159px; top: 11px; width: 76px; height: 112px; }
.j-east { left: 159px; top: 215px; width: 77px; height: 133px; }
.j427 { left: 159px; top: 113px; width: 76px; height: 114px; }
.j342 { left: 408px; top: 11px; width: 76px; height: 95px; }
.j410 { left: 491px; top: 11px; width: 76px; height: 95px; }
.j429 { left: 408px; top: 113px; width: 84px; height: 109px; }
.j430 { left: 491px; top: 113px; width: 79px; height: 102px; }
.j408 { left: 491px; top: 216px; width: 76px; height: 98px; }
.j411 { left: 491px; top: 419px; width: 76px; height: 97px; }
.j424 { left: 491px; top: 317px; width: 76px; height: 108px; }
.j413 { left: 823px; top: 62px; width: 80px; height: 102px; }
.j432 { left: 823px; top: 164px; width: 76px; height: 134px; }
.j434 { left: 906px; top: 317px; width: 76px; height: 98px; }
.j438 { position: relative; width: 88px; height: 60px; margin-top: 18px; background: #666; }
```
